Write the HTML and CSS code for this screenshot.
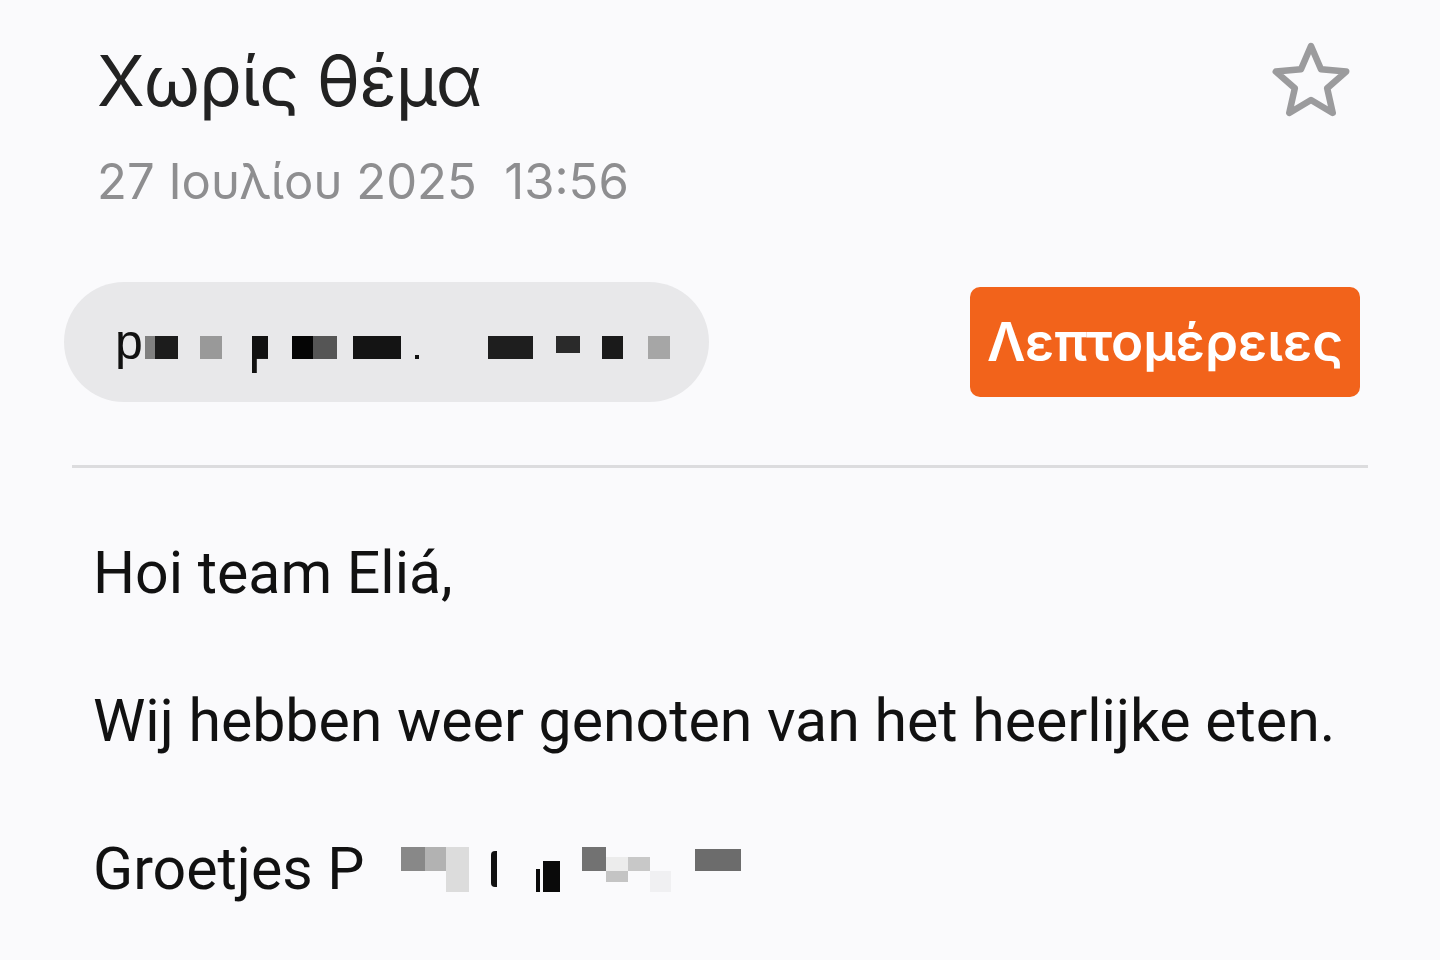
FILE: index.html
```html
<!DOCTYPE html>
<html lang="el">
<head>
<meta charset="utf-8">
<title>Χωρίς θέμα</title>
<link rel="stylesheet" href="styles.css">
</head>
<body>
<main class="mail">
  <header class="head">
    <div class="head-text">
      <h1 class="subject">Χωρίς θέμα</h1>
      <div class="date">27 Ιουλίου 2025&nbsp;&nbsp;13:56</div>
    </div>
    <button class="star" aria-label="Αστέρι">
      <svg width="80" height="78" viewBox="0 0 80 78"><path d="M40 4 L49.99 27.25 L75.19 29.57 L56.17 46.25 L61.75 70.93 L40 58 L18.25 70.93 L23.83 46.25 L4.81 29.57 L30.01 27.25 Z" fill="none" stroke="#9b9b9d" stroke-width="6.5" stroke-linejoin="round"/></svg>
    </button>
  </header>
  <section class="sender-row">
    <div class="pill">
      <span class="p-letter">p</span><span class="blk b1"></span><span class="blk b2"></span><span class="blk b3"></span><span class="blk b4"></span><span class="blk b5"></span><span class="blk b6"></span><span class="blk b7"></span><span class="blk dot"></span><span class="blk b8"></span><span class="blk b9"></span><span class="blk b10"></span><span class="blk b11"></span>
    </div>
    <button class="details">Λεπτομέρειες</button>
  </section>
  <hr class="divider">
  <article class="body">
    <p>Hoi team Eliá,</p>
    <p>Wij hebben weer genoten van het heerlijke eten.</p>
    <p>Groetjes P<span class="blk s1"></span><span class="blk s2"></span><span class="blk s3"></span><span class="blk s4"></span><span class="blk s5a"></span><span class="blk s5"></span><span class="blk s6"></span><span class="blk s7"></span><span class="blk s8"></span><span class="blk s9"></span><span class="blk s10"></span></p>
  </article>
</main>
</body>
</html>
```
FILE: styles.css
```css
html, body {
  margin: 0;
  padding: 0;
  background: #fafafc;
}
body {
  width: 1440px;
  height: 960px;
  overflow: hidden;
}
.mail {
  padding: 0 72px 0 64px;
}
.head {
  display: flex;
  justify-content: space-between;
  align-items: flex-start;
  padding: 36px 0 0 33px;
}
.subject {
  margin: 0;
  font-family: Inter, "Noto Sans", sans-serif;
  font-weight: 400;
  font-size: 70px;
  line-height: 90px;
  color: #222;
  letter-spacing: -1px;
}
.date {
  margin-top: 20px;
  font-family: Inter, "Noto Sans", sans-serif;
  font-size: 49px;
  line-height: 72px;
  color: #8e8e90;
}
.star {
  border: 0;
  background: none;
  padding: 0;
  margin: 6px 17px 0 0;
  width: 80px;
  height: 78px;
  display: block;
}
.star svg { display: block; }
.sender-row {
  display: flex;
  justify-content: space-between;
  align-items: center;
  margin-top: 64px;
}
.pill {
  width: 645px;
  height: 120px;
  box-sizing: border-box;
  border-radius: 60px;
  background: #e8e8ea;
  padding: 0 0 0 51px;
  font-family: "Liberation Sans", Arial, sans-serif;
  font-size: 50px;
  line-height: 120px;
  color: #111;
  white-space: nowrap;
}
.blk {
  display: inline-block;
  height: 23px;
  vertical-align: 0;
  background: #111;
}
.b1 { margin-left: 2px; width: 10px; background: #808080; }
.b2 { width: 23px; background: #1c1c1c; }
.b3 { margin-left: 22px; width: 22px; background: #999; }
.b4 {
  margin-left: 30px;
  width: 16px;
  height: 37px;
  vertical-align: -14px;
  background:
    linear-gradient(#111, #111) top left / 100% 62% no-repeat,
    linear-gradient(#111, #111) top left / 30% 100% no-repeat;
}
.b5 { margin-left: 24px; width: 21px; background: #050505; }
.b6 { width: 24px; background: #555; }
.b7 { margin-left: 16px; width: 48px; background: #141414; }
.dot { margin-left: 14px; width: 4px; height: 4px; }
.b8 { margin-left: 69px; width: 45px; background: #1e1e1e; }
.b9 { margin-left: 23px; width: 24px; height: 17px; vertical-align: 6px; background: #2a2a2a; }
.b10 { margin-left: 22px; width: 21px; background: #1a1a1a; }
.b11 { margin-left: 25px; width: 22px; background: #a6a6a6; }
.details {
  border: 0;
  width: 390px;
  height: 110px;
  border-radius: 10px;
  background: #f2631b;
  color: #fff;
  font-family: Inter, "Noto Sans", sans-serif;
  font-weight: 600;
  font-size: 53px;
  padding: 0;
  margin-right: 8px;
}
.divider {
  border: 0;
  height: 3px;
  background: #dcdcde;
  margin: 63px 0 0 8px;
}
.body {
  padding: 68px 0 0 29px;
  font-family: Roboto, "Liberation Sans", sans-serif;
  font-size: 59px;
  color: #111;
}
.body p {
  margin: 0 0 74px 0;
  line-height: 74px;
  white-space: nowrap;
}
.s1 { margin-left: 36px; width: 24px; height: 24px; vertical-align: 18px; background: #888; }
.s2 { width: 21px; height: 24px; vertical-align: 18px; background: #b2b2b2; }
.s3 { width: 23px; height: 45px; vertical-align: -3px; background: #dcdcdc; }
.s4 { margin-left: 22px; width: 6px; height: 36px; vertical-align: 2px; background: #111; border-radius: 4px 0 0 4px; }
.s5a { margin-left: 39px; width: 4px; height: 23px; vertical-align: -3px; background: #0a0a0a; }
.s5 { margin-left: 3px; width: 17px; height: 31px; vertical-align: -3px; background: #0a0a0a; }
.s6 { margin-left: 22px; width: 24px; height: 24px; vertical-align: 18px; background: #727272; }
.s7 { width: 22px; height: 25px; vertical-align: 7px; background: linear-gradient(#ececec 56%, #c4c4c4 56%); }
.s8 { width: 22px; height: 14px; vertical-align: 18px; background: #c8c8c8; }
.s9 { width: 21px; height: 21px; vertical-align: -3px; background: #f0f0f2; }
.s10 { margin-left: 24px; width: 46px; height: 22px; vertical-align: 18px; background: #6c6c6c; }
```
